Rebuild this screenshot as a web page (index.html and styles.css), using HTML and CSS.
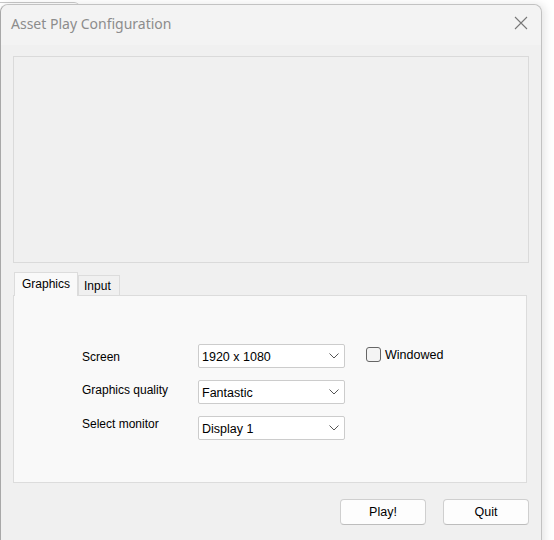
FILE: index.html
```html
<!DOCTYPE html>
<html>
<head>
<meta charset="utf-8">
<link rel="stylesheet" href="styles.css">
</head>
<body>
<div class="backwin"></div>
<div class="window">
  <div class="titlebar">
    <span class="title">Asset Play Configuration</span>
    <svg class="close" width="14" height="14" viewBox="0 0 14 14"><path d="M1 1L13 13M13 1L1 13" stroke="#777" stroke-width="1.1" fill="none"/></svg>
  </div>
  <div class="preview"></div>
  <div class="tabs">
    <div class="tab active">Graphics</div>
    <div class="tab">Input</div>
  </div>
  <div class="panel">
    <div class="form">
      <div class="label l1">Screen</div>
      <div class="select"><span>1920 x 1080</span><svg width="10" height="6" viewBox="0 0 10 6"><path d="M0.5 0.5L5 5L9.5 0.5" stroke="#555" fill="none"/></svg></div>
      <label class="check"><span class="box"></span>Windowed</label>
      <div class="label l2">Graphics quality</div>
      <div class="select"><span>Fantastic</span><svg width="10" height="6" viewBox="0 0 10 6"><path d="M0.5 0.5L5 5L9.5 0.5" stroke="#555" fill="none"/></svg></div>
      <div></div>
      <div class="label l3">Select monitor</div>
      <div class="select"><span>Display 1</span><svg width="10" height="6" viewBox="0 0 10 6"><path d="M0.5 0.5L5 5L9.5 0.5" stroke="#555" fill="none"/></svg></div>
      <div></div>
    </div>
  </div>
  <div class="buttons">
    <button class="btn">Play!</button>
    <button class="btn">Quit</button>
  </div>
</div>
</body>
</html>
```
FILE: styles.css
```css
html, body {
  margin: 0;
  padding: 0;
  background: #ffffff;
  overflow: hidden;
  width: 554px;
  height: 540px;
}
body {
  position: relative;
}
.backwin {
  position: absolute;
  left: 0;
  top: 2px;
  width: 80px;
  height: 10px;
  border-top: 1px solid #c8c8c8;
  border-top-right-radius: 6px;
}
.window {
  position: relative;
  margin-top: 4px;
  width: 542px;
  height: 560px;
  box-sizing: border-box;
  background: #f0f0f0;
  border: 1px solid #c2c2c2;
  border-left-color: #a8a8a8;
  border-radius: 8px;
  box-shadow: 3px 0 8px rgba(0,0,0,0.10);
}
.titlebar {
  height: 40px;
  display: flex;
  align-items: center;
  justify-content: space-between;
  padding: 0 13px 0 10px;
  background: #f3f3f3;
  border-radius: 8px 8px 0 0;
}
.title {
  font-family: "Noto Sans", sans-serif;
  font-size: 14px;
  color: #8c8c8c;
  margin-top: -3px;
}
.close {
  margin-top: -4px;
}
.preview {
  margin: 11px 12px 0 12px;
  height: 207px;
  box-sizing: border-box;
  border: 1px solid #dadada;
  background: #f0f0f0;
}
.tabs {
  margin: 9px 0 0 13px;
  display: flex;
  align-items: flex-end;
  height: 23px;
  font-family: "Liberation Sans", sans-serif;
  font-size: 12px;
  position: relative;
  z-index: 1;
}
.tab {
  box-sizing: border-box;
  height: 20px;
  padding: 3px 8px 0 5px;
  border: 1px solid #dcdcdc;
  border-bottom: none;
  background: #f0f0f0;
  color: #000;
}
.tab.active {
  height: 24px;
  margin-bottom: -1px;
  padding: 4px 7px 0 7px;
  background: #f9f9f9;
  border-color: #dcdcdc;
}
.panel {
  margin: 0 14px 0 12px;
  height: 188px;
  box-sizing: border-box;
  border: 1px solid #dcdcdc;
  background: #f9f9f9;
  padding: 48px 0 0 68px;
}
.form {
  display: grid;
  grid-template-columns: 116px 147px auto;
  grid-auto-rows: 24px;
  row-gap: 12px;
  font-family: "Liberation Sans", sans-serif;
  font-size: 12px;
  color: #000;
}
.label {
  align-self: start;
}
.l1 { padding-top: 6px; }
.l2 { padding-top: 3px; }
.l3 { padding-top: 1px; }
.select {
  box-sizing: border-box;
  height: 24px;
  border: 1px solid #cccccc;
  border-radius: 2px;
  background: #ffffff;
  display: flex;
  align-items: center;
  justify-content: space-between;
  padding: 1px 5px 0 3px;
  font-size: 12.5px;
}
.select svg {
  margin-top: -1px;
}
.check {
  display: flex;
  align-items: center;
  margin-left: 21px;
  margin-top: -3px;
  font-size: 12.5px;
  gap: 4px;
}
.box {
  width: 15px;
  height: 15px;
  box-sizing: border-box;
  border: 1px solid #666;
  border-radius: 3px;
  background: #f4f4f4;
}
.buttons {
  display: flex;
  justify-content: flex-end;
  gap: 17px;
  margin: 16px 12px 0 0;
}
.btn {
  width: 86px;
  height: 26px;
  box-sizing: border-box;
  background: #fdfdfd;
  border: 1px solid #cfcfcf;
  border-bottom-color: #bdbdbd;
  border-radius: 4px;
  font-family: "Liberation Sans", sans-serif;
  font-size: 12.5px;
  color: #000;
  padding: 0;
}
```
